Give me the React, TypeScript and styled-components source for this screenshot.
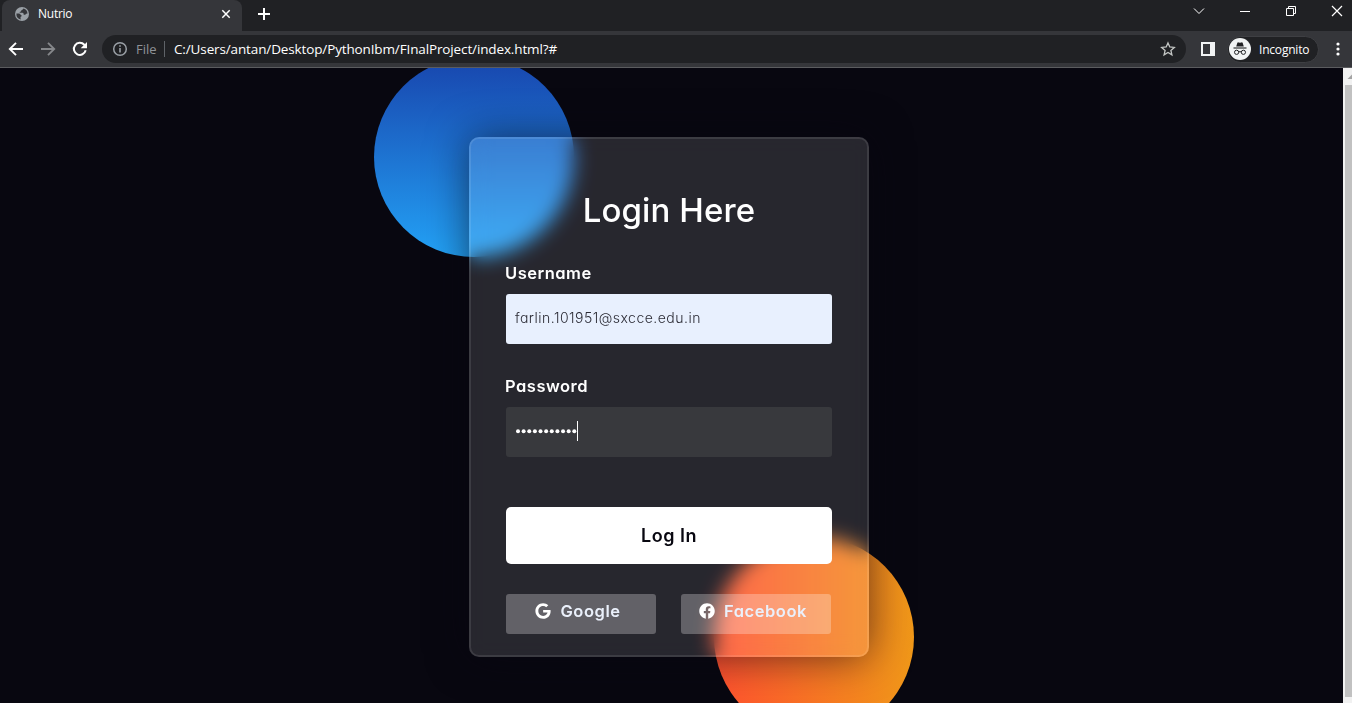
import React from "react";
import styled, { createGlobalStyle } from "styled-components";
import { FaGoogle, FaFacebook } from "react-icons/fa";

const GlobalStyle = createGlobalStyle`
  *, *::before, *::after { box-sizing: border-box; margin: 0; padding: 0; }
  body { background: #080710; overflow: hidden; }
`;

const uiFont = `"Open Sans", "Noto Sans", sans-serif`;
const pageFont = `Inter, "Open Sans", sans-serif`;

const Window = styled.div`
  display: flex;
  flex-direction: column;
  width: 1352px;
  height: 703px;
  overflow: hidden;
  font-family: ${uiFont};
`;

const TabStrip = styled.header`
  display: flex;
  flex: none;
  height: 31px;
  background: #202124;
  color: #fff;
`;

const Tab = styled.div`
  display: flex;
  align-items: center;
  width: 240px;
  margin-left: 2px;
  padding: 0 11px 3px 13px;
  border-radius: 8px 8px 0 0;
  background: #35363a;
`;

const TabTitle = styled.span`
  flex: 1;
  margin-left: 9px;
  font-size: 12px;
  line-height: 16px;
  letter-spacing: -0.25px;
`;

const NewTab = styled.div`
  display: flex;
  align-items: center;
  padding: 0 0 3px 15px;
`;

const WindowButtons = styled.div`
  display: flex;
  gap: 34px;
  margin-left: auto;
  padding: 5px 9px 0 0;
`;

const Toolbar = styled.div`
  display: flex;
  flex: none;
  align-items: center;
  height: 37px;
  padding-left: 8px;
  border-bottom: 1px solid #5b5c5f;
  background: #35363a;
`;

const NavButtons = styled.div`
  display: flex;
  gap: 16px;
  width: 94px;
`;

const AddressBar = styled.div`
  display: flex;
  align-items: center;
  width: 1084px;
  height: 28px;
  padding: 0 10px;
  border-radius: 14px;
  background: #202124;
  color: #fff;
  font-size: 13px;
  line-height: 18px;
`;

const Scheme = styled.span`
  width: 29px;
  margin-left: 8px;
  border-right: 1px solid #5f6368;
  color: #8f9398;
  line-height: 16px;
`;

const Url = styled.span`
  flex: 1;
  margin-left: 9px;
  font-size: 13.5px;
  letter-spacing: -0.13px;
`;

const SidePanel = styled.div`
  width: 14px;
  height: 14px;
  margin-left: 15px;
  border: 2px solid #f1f3f4;
  border-right-width: 5px;
`;

const Profile = styled.div`
  display: flex;
  align-items: center;
  width: 92px;
  height: 27px;
  margin: 0 11px 0 12px;
  padding-left: 1px;
  border: 1px solid #3e3f43;
  border-radius: 14px;
  background: #202124;
  color: #fff;
  font-size: 12px;
  letter-spacing: -0.2px;
`;

const ProfileName = styled.span`
  margin-left: 8px;
`;

const Viewport = styled.div`
  display: flex;
  flex: 1;
  min-height: 0;
`;

const Page = styled.main`
  display: flex;
  justify-content: center;
  flex: 1;
  padding: 69px 5px 0 0;
  overflow: hidden;
  background: #080710;
  font-family: ${pageFont};
  font-feature-settings: "cv11", "ss03";
`;

const Stage = styled.div`
  position: relative;
  flex: none;
  width: 430px;
  height: 520px;
  padding: 0 15px;
`;

const Shape = styled.div<{ $corner: "top" | "bottom" }>`
  position: absolute;
  width: 200px;
  height: 200px;
  border-radius: 50%;
  ${({ $corner }) =>
    $corner === "top"
      ? "top: -80px; left: -80px; background: linear-gradient(#1845ad, #23a2f6);"
      : "bottom: -80px; right: -30px; background: linear-gradient(to right, #ff512f, #f09819);"}
`;

const Card = styled.form`
  position: relative;
  width: 400px;
  height: 520px;
  padding: 50px 35px;
  border: 2px solid rgba(255, 255, 255, 0.1);
  border-radius: 10px;
  background: rgba(255, 255, 255, 0.13);
  backdrop-filter: blur(10px);
  box-shadow: 0 0 40px rgba(8, 7, 16, 0.6);
  color: #fff;
`;

const Title = styled.h3`
  font-size: 33px;
  font-weight: 540;
  line-height: 42px;
  letter-spacing: 0.1px;
  text-align: center;
`;

const Label = styled.label`
  display: block;
  height: 25px;
  margin: 30px 0 0 -1px;
  font-size: 16.5px;
  font-weight: 600;
  line-height: 25px;
  letter-spacing: 0.5px;
`;

const Field = styled.div<{ $filled?: boolean }>`
  display: flex;
  align-items: center;
  height: 50px;
  margin-top: 8px;
  padding: 0 10px 0 9px;
  border-radius: 3px;
  background: ${({ $filled }) => ($filled ? "#e8f0fe" : "#38393d")};
  color: ${({ $filled }) => ($filled ? "#2b2b35" : "#fff")};
  font-size: 14px;
  font-weight: 300;
  letter-spacing: 0.48px;
`;

const FieldText = styled.span`
  padding-bottom: 3px;
`;

const Bullets = styled.svg`
  display: block;
  margin: 0 0 2px 1px;
`;

const Submit = styled.button`
  display: block;
  width: 100%;
  height: 57px;
  margin-top: 50px;
  border: 0;
  border-radius: 5px;
  background: #fff;
  color: #080710;
  font-family: inherit;
  font-feature-settings: inherit;
  font-size: 18px;
  font-weight: 600;
  line-height: 27px;
  letter-spacing: 0.5px;
`;

const Social = styled.div`
  display: flex;
  gap: 25px;
  margin-top: 30px;
`;

const SocialButton = styled.div`
  display: flex;
  align-items: center;
  justify-content: center;
  gap: 9px;
  width: 150px;
  height: 40px;
  padding: 0 6px 6px 0;
  border-radius: 3px;
  background: rgba(255, 255, 255, 0.27);
  color: #eaf0fb;
  font-size: 16.5px;
  font-weight: 600;
  letter-spacing: 0.55px;

  svg { flex: none; color: #fff; }
`;

const ScrollTrack = styled.div`
  display: flex;
  flex-direction: column;
  align-items: flex-end;
  justify-content: space-between;
  width: 9px;
  padding-bottom: 6px;
  background: #f1f1f1;
`;

const ScrollThumb = styled.div`
  width: 7px;
  height: 612px;
  background: #c1c1c1;
`;

const Globe = () => (
  <svg width="14" height="14" viewBox="0 0 14 14">
    <circle cx="7" cy="7" r="7" fill="#9aa0a6" />
    <path d="M8.6 1.6C7.7 2 7.9 3 6.6 3.2 5.9 3.4 6.3 4.6 5.3 4.7c-.5.1-.8.5-.5 1h2.7c1 0 1.1.9 1.1 1.6 0 .8.9.5 1.4.5.7 0 .6-.9 1.2-1.1l1.300-.2A5.600 5.600 0 0 0 8.600 1.600zM1.400 6.500c.3 0 3.100-.1 3.600.3.6.5.4 1.200 1.200 1.400.8.200.8 1.200-.1 1.300-.7.100-.6 1.100-.5 1.900l.3 1A5.600 5.600 0 0 1 1.400 6.500z" fill="#35363a" />
  </svg>
);

const Incognito = () => (
  <svg width="22" height="22" viewBox="0 0 22 22">
    <circle cx="11" cy="11" r="11" fill="#f1f3f4" />
    <path d="M7.200 8.500 8.300 5c.2-.6.600-.8 1.200-.6l1.500.4 1.500-.4c.6-.2 1 0 1.200.6l1.100 3.500z" fill="#202124" />
    <path d="M4.500 10h13" stroke="#202124" strokeWidth="1.100" />
    <g fill="none" stroke="#202124">
      <circle cx="7.600" cy="14.300" r="2.100" />
      <circle cx="14.400" cy="14.300" r="2.100" />
      <path d="M9.700 14q1.300-.8 2.600 0" />
    </g>
  </svg>
);

export default function App() {
  return (
    <Window>
      <GlobalStyle />
      <TabStrip>
        <Tab>
          <Globe />
          <TabTitle>Nutrio</TabTitle>
          <svg width="10" height="10" viewBox="0 0 10 10" stroke="#fff" strokeWidth="1.500">
            <path d="M1.300 1.300l7.400 7.400M8.700 1.300 1.300 8.700" />
          </svg>
        </Tab>
        <NewTab>
          <svg width="14" height="14" viewBox="0 0 14 14" stroke="#fff" strokeWidth="2">
            <path d="M7 1v12M1 7h12" />
          </svg>
        </NewTab>
        <WindowButtons>
          <svg width="12" height="12" viewBox="0 0 12 12" fill="none" stroke="#fff">
            <path d="M1 3.500 6 8.500l5-5" />
          </svg>
          <svg width="12" height="12" viewBox="0 0 12 12" stroke="#fff">
            <path d="M1 6.500h10" />
          </svg>
          <svg width="12" height="12" viewBox="0 0 12 12" fill="none" stroke="#fff">
            <path d="M1.500 3.500h7v7h-7zM3.500 3.500v-2h7v7h-2" />
          </svg>
          <svg width="12" height="12" viewBox="0 0 12 12" stroke="#fff" strokeWidth="1.200">
            <path d="M1 1l10 10M11 1 1 11" />
          </svg>
        </WindowButtons>
      </TabStrip>
      <Toolbar>
        <NavButtons>
          <svg width="16" height="16" viewBox="0 0 16 16" fill="none" stroke="#fff" strokeWidth="1.900">
            <path d="M15 8H2.500M8 1.800 1.800 8 8 14.200" />
          </svg>
          <svg width="16" height="16" viewBox="0 0 16 16" fill="none" stroke="#85878a" strokeWidth="1.900">
            <path d="M1 8h12.500M8 1.800 14.200 8 8 14.200" />
          </svg>
          <svg width="16" height="16" viewBox="0 0 16 16">
            <path d="M13.700 9.300A6 6 0 1 1 12.300 3.800L14 5.500" fill="none" stroke="#fff" strokeWidth="2" />
            <path d="M15 1v6.300H8.700z" fill="#fff" />
          </svg>
        </NavButtons>
        <AddressBar>
          <svg width="16" height="16" viewBox="0 0 16 16" fill="none" stroke="#9aa0a6" strokeWidth="1.500">
            <circle cx="8" cy="8" r="6.300" />
            <path d="M8 7v4.500M8 4.300v1.500" strokeWidth="1.600" />
          </svg>
          <Scheme>File</Scheme>
          <Url>C:/Users/antan/Desktop/PythonIbm/FInalProject/index.html?#</Url>
          <svg width="16" height="16" viewBox="0 0 16 16" fill="none" stroke="#c4c7c5" strokeWidth="1.300">
            <path d="M8 1.900l1.800 4.100 4.500.4-3.400 3 1 4.400L8 11.500l-3.900 2.300 1-4.400-3.400-3 4.500-.4z" />
          </svg>
        </AddressBar>
        <SidePanel />
        <Profile>
          <Incognito />
          <ProfileName>Incognito</ProfileName>
        </Profile>
        <svg width="16" height="16" viewBox="0 0 16 16" fill="#fff">
          <circle cx="8" cy="3" r="1.600" />
          <circle cx="8" cy="8" r="1.600" />
          <circle cx="8" cy="13" r="1.600" />
        </svg>
      </Toolbar>
      <Viewport>
        <Page>
          <Stage>
            <Shape $corner="top" />
            <Shape $corner="bottom" />
            <Card>
              <Title>Login Here</Title>
              <Label>Username</Label>
              <Field $filled>
                <FieldText>farlin.101951@sxcce.edu.in</FieldText>
              </Field>
              <Label>Password</Label>
              <Field>
                <Bullets width="64" height="20" viewBox="0 0 64 20" fill="#fff">
                  {Array.from({ length: 11 }, (_, i) => (
                    <circle key={i} cx={2 + i * 5.63} cy="10.300" r="2" />
                  ))}
                  <rect x="61" y="0" width="1" height="20" />
                </Bullets>
              </Field>
              <Submit type="button">Log In</Submit>
              <Social>
                <SocialButton>
                  <FaGoogle size={16} />
                  Google
                </SocialButton>
                <SocialButton>
                  <FaFacebook size={16} />
                  Facebook
                </SocialButton>
              </Social>
            </Card>
          </Stage>
        </Page>
        <ScrollTrack>
          <svg width="9" height="17" viewBox="0 0 9 17" fill="#a3a3a3">
            <path d="M4.500 11 9 6.500V11z" />
          </svg>
          <ScrollThumb />
        </ScrollTrack>
      </Viewport>
    </Window>
  );
}
